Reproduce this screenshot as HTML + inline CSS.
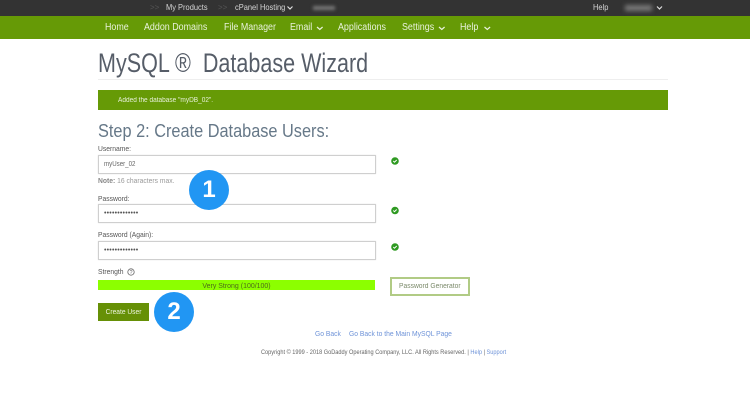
<!DOCTYPE html>
<html><head><meta charset="utf-8"><style>
html,body{margin:0;padding:0;width:750px;height:400px;overflow:hidden;background:#fff;font-family:"Liberation Sans",sans-serif}
.t{position:absolute;white-space:pre;line-height:1;transform-origin:0 0}
.c{transform-origin:50% 0}
.b{position:absolute}
.w{color:#e8f2dc;font-size:10px;transform:scaleX(.89)}
.tb{font-size:8.5px;color:#d5d5d5;transform:scaleX(.88)}
.l{color:#555;font-size:7.5px;transform:scaleX(.9)}
.in{position:absolute;left:98px;width:276px;height:17px;border:1px solid #cfcfcf;background:#fff;box-shadow:0 0 1px #ddd}
svg{position:absolute;overflow:visible}
</style></head><body>
<div class="b" style="left:0;top:0;width:750px;height:16px;background:#333"></div>
<div class="b" style="left:0;top:16px;width:750px;height:23px;background:#669a06"></div>
<div class="t" style="left:150px;top:4px;font-size:8px;color:#555">&gt;&gt;</div>
<div class="t tb" style="left:166px;top:3px">My Products</div>
<div class="t" style="left:218px;top:4px;font-size:8px;color:#555">&gt;&gt;</div>
<div class="t tb" style="left:235px;top:3px">cPanel Hosting</div>
<svg style="left:0;top:0" width="750" height="40" fill="none" stroke-width="1.2">
<path d="M287.500 6.500l2.500 2.500 2.500-2.500M657 6.500l2.500 2.500 2.500-2.500" stroke="#ddd"/>
<path d="M317 27l2.800 2.500 2.800-2.500M439 27l2.800 2.500 2.800-2.500M484.500 27l2.800 2.500 2.800-2.500" stroke="#e8f2dc"/>
</svg>
<div class="b" style="left:313px;top:6px;width:22px;height:4px;background:#777;filter:blur(1.5px)"></div>
<div class="t tb" style="left:593px;top:3px">Help</div>
<div class="b" style="left:625px;top:5px;width:27px;height:6px;background:#777;filter:blur(2px)"></div>
<div class="t w" style="left:105px;top:23px">Home</div>
<div class="t w" style="left:144px;top:23px">Addon Domains</div>
<div class="t w" style="left:224px;top:23px">File Manager</div>
<div class="t w" style="left:290px;top:23px">Email</div>
<div class="t w" style="left:338px;top:23px">Applications</div>
<div class="t w" style="left:402px;top:23px">Settings</div>
<div class="t w" style="left:460px;top:23px">Help</div>

<div class="t" style="left:98px;top:50px;font-size:27px;color:#565d68;transform:scaleX(.798)">MySQL ®  Database Wizard</div>
<div class="b" style="left:98px;top:79px;width:570px;height:1px;background:#eee"></div>
<div class="b" style="left:98px;top:90px;width:570px;height:20px;background:#669a06"></div>
<div class="t" style="left:118px;top:97px;font-size:7px;color:#e6f0d8;transform:scaleX(.93)">Added the database "myDB_02".</div>

<div class="t" style="left:98px;top:122px;font-size:18px;color:#667888;transform:scaleX(.906)">Step 2: Create Database Users:</div>
<div class="t l" style="left:98px;top:145px">Username:</div>
<div class="in" style="top:155px"></div>
<div class="t" style="left:104px;top:160px;font-size:7.500px;color:#666;transform:scaleX(.82)">myUser_02</div>
<div class="t" style="left:98px;top:177px;font-size:7.500px;color:#999;transform:scaleX(.9)"><b style="color:#888">Note:</b> 16 characters max.</div>
<div class="t l" style="left:98px;top:195px">Password:</div>
<div class="in" style="top:204px"></div>
<div class="t" style="left:104px;top:210px;font-size:7px;color:#555;letter-spacing:.2px">•••••••••••••</div>
<div class="t l" style="left:98px;top:231px">Password (Again):</div>
<div class="in" style="top:241px"></div>
<div class="t" style="left:104px;top:247px;font-size:7px;color:#555;letter-spacing:.2px">•••••••••••••</div>
<div class="t l" style="left:98px;top:268px">Strength</div>
<svg style="left:126.500px;top:268px" width="8" height="8"><circle cx="4" cy="4" r="3.200" fill="none" stroke="#666" stroke-width=".8"/><text x="4" y="6.200" font-size="5.500" text-anchor="middle" fill="#666" font-family="Liberation Sans">?</text></svg>
<div class="b" style="left:98px;top:280px;width:277px;height:10px;background:#8cff00"></div>
<div class="t c" style="left:98px;top:281.500px;width:277px;text-align:center;font-size:7.500px;color:#4d6b1a;transform:scaleX(.93)">Very Strong (100/100)</div>
<div class="b" style="left:390px;top:277px;width:76px;height:15px;border:2px solid #b1cb85;background:#fff"></div>
<div class="t" style="left:399px;top:283px;font-size:7px;color:#7b8a6a;transform:scaleX(.96)">Password Generator</div>

<svg style="left:390px;top:157px" width="10" height="10"><circle cx="5" cy="4" r="3.800" fill="#2f9a22"/><path d="M3.300 4l1.200 1.200 2.200-2.200" fill="none" stroke="#fff" stroke-width="1"/></svg>
<svg style="left:390px;top:206px" width="10" height="10"><circle cx="5" cy="4.500" r="3.800" fill="#2f9a22"/><path d="M3.300 4.500l1.200 1.200 2.200-2.200" fill="none" stroke="#fff" stroke-width="1"/></svg>
<svg style="left:390px;top:242px" width="10" height="10"><circle cx="5" cy="5" r="3.800" fill="#2f9a22"/><path d="M3.300 5l1.200 1.200 2.200-2.200" fill="none" stroke="#fff" stroke-width="1"/></svg>

<div class="b" style="left:98px;top:303px;width:51px;height:18px;background:#669006"></div>
<div class="t c" style="left:98px;top:308.500px;width:51px;text-align:center;font-size:7px;color:#eef5e0;transform:scaleX(.95)">Create User</div>

<div class="b" style="left:189px;top:170px;width:40px;height:40px;border-radius:50%;background:#2196f3"></div>
<div class="t" style="left:189px;top:178px;width:40px;text-align:center;font-size:24px;font-weight:bold;color:#fff">1</div>
<div class="b" style="left:154px;top:292px;width:40px;height:40px;border-radius:50%;background:#2196f3"></div>
<div class="t" style="left:154px;top:300px;width:40px;text-align:center;font-size:24px;font-weight:bold;color:#fff">2</div>

<div class="t" style="left:315px;top:330px;font-size:7.500px;color:#6e93d8;transform:scaleX(.9)">Go Back</div>
<div class="t" style="left:349px;top:330px;font-size:7.500px;color:#6e93d8;transform:scaleX(.9)">Go Back to the Main MySQL Page</div>
<div class="t" style="left:261px;top:350px;font-size:6px;color:#666;transform:scaleX(.935)">Copyright © 1999 - 2018 GoDaddy Operating Company, LLC. All Rights Reserved. | <span style="color:#6e93d8">Help</span> | <span style="color:#6e93d8">Support</span></div>
</body></html>
